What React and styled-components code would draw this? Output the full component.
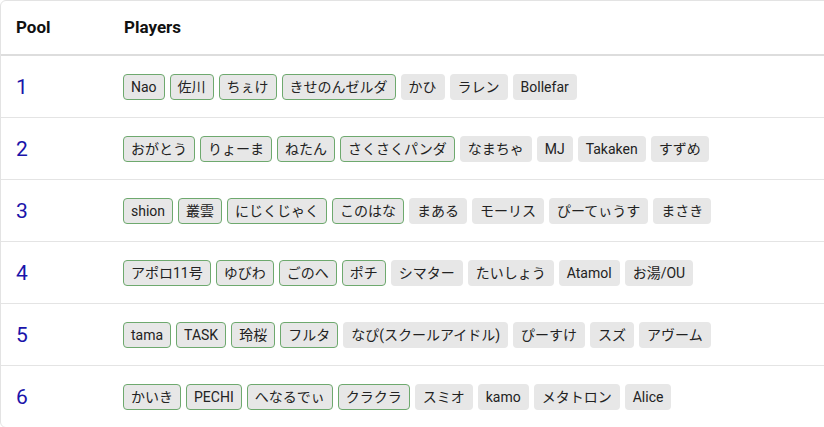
import React from "react";
import styled, { createGlobalStyle } from "styled-components";

const Global = createGlobalStyle`
  html, body { margin: 0; padding: 0; background: #fff; overflow: hidden; }
  body { font-family: Roboto, "Noto Sans CJK JP", sans-serif; color: #1f1f1f; }
`;

const Card = styled.div`
  width: 840px;
  border: 1px solid #e3e3e3;
  border-radius: 6px;
  background: #fff;
  overflow: hidden;
`;

const Table = styled.table`
  width: 100%;
  border-collapse: collapse;
`;

const HeadCell = styled.th`
  text-align: left;
  font-weight: 700;
  font-size: 17px;
  color: #111;
  height: 52px;
  padding: 0 ${(p) => (p.$first ? "15px" : "16px")} 1px;
  width: ${(p) => (p.$first ? "77px" : "auto")};
  border-bottom: 2px solid #dddddd;
  vertical-align: middle;
`;

const Row = styled.tr`
  border-bottom: 1px solid #e4e4e4;
  &:last-child { border-bottom: none; }
`;

const PoolCell = styled.td`
  height: 61px;
  padding: 0 15px;
  font-size: 21px;
  color: #1a14aa;
  vertical-align: middle;
`;

const PlayersCell = styled.td`
  padding: 0 16px 0 15px;
  vertical-align: middle;
`;

const Chips = styled.div`
  display: flex;
  flex-wrap: wrap;
  gap: 5px;
`;

const Chip = styled.span`
  display: inline-block;
  font-size: 14px;
  line-height: 20px;
  padding: 2px 7px;
  border-radius: 4px;
  color: #222;
  background: #e7e7e7;
  border: 1px solid ${(p) => (p.$seeded ? "#6ea96e" : "transparent")};
  white-space: nowrap;
`;

const pools = [
  ["Nao", "佐川", "ちぇけ", "きせのんゼルダ", "かひ", "ラレン", "Bollefar"],
  ["おがとう", "りょーま", "ねたん", "さくさくパンダ", "なまちゃ", "MJ", "Takaken", "すずめ"],
  ["shion", "叢雲", "にじくじゃく", "このはな", "まある", "モーリス", "ぴーてぃうす", "まさき"],
  ["アポロ11号", "ゆびわ", "ごのへ", "ポチ", "シマター", "たいしょう", "Atamol", "お湯/OU"],
  ["tama", "TASK", "玲桜", "フルタ", "なぴ(スクールアイドル)", "ぴーすけ", "スズ", "アヴーム"],
  ["かいき", "PECHI", "へなるでぃ", "クラクラ", "スミオ", "kamo", "メタトロン", "Alice"],
];

export default function App() {
  return (
    <>
      <Global />
      <Card>
        <Table>
          <thead>
            <tr>
              <HeadCell $first>Pool</HeadCell>
              <HeadCell>Players</HeadCell>
            </tr>
          </thead>
          <tbody>
            {pools.map((players, i) => (
              <Row key={i}>
                <PoolCell>{i + 1}</PoolCell>
                <PlayersCell>
                  <Chips>
                    {players.map((name, j) => (
                      <Chip key={j} $seeded={j < 4}>
                        {name}
                      </Chip>
                    ))}
                  </Chips>
                </PlayersCell>
              </Row>
            ))}
          </tbody>
        </Table>
      </Card>
    </>
  );
}
